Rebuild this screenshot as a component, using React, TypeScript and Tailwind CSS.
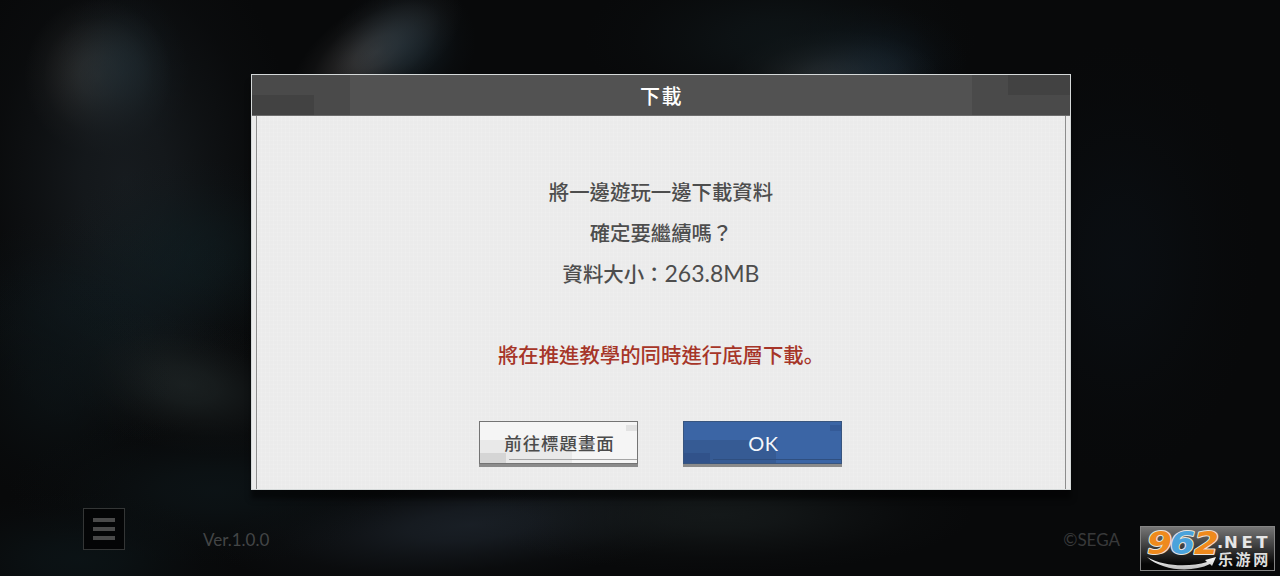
import type { ReactNode } from "react";

const glows = [
    { cx: 98, cy: 76, rx: 64, ry: 68, rotate: 0, color: "#4a4845", opacity: 0.75 },
    { cx: 122, cy: 74, rx: 58, ry: 74, rotate: 0, color: "#1d3642", opacity: 0.55 },
    { cx: 376, cy: 52, rx: 86, ry: 42, rotate: -34, color: "#4a4848", opacity: 0.75 },
    { cx: 404, cy: 46, rx: 64, ry: 58, rotate: -30, color: "#1c303c", opacity: 0.5 },
    { cx: 835, cy: 74, rx: 90, ry: 38, rotate: 0, color: "#444749", opacity: 0.75 },
    { cx: 872, cy: 66, rx: 84, ry: 54, rotate: 0, color: "#152838", opacity: 0.55 },
    { cx: 780, cy: 40, rx: 170, ry: 75, rotate: 0, color: "#10181b", opacity: 0.7 },
    { cx: 125, cy: 180, rx: 150, ry: 230, rotate: 0, color: "#191e22", opacity: 0.85 },
    { cx: 190, cy: 255, rx: 120, ry: 85, rotate: 0, color: "#101f23", opacity: 0.6 },
    { cx: 100, cy: 310, rx: 150, ry: 85, rotate: 0, color: "#101c21", opacity: 0.6 },
    { cx: 185, cy: 385, rx: 115, ry: 58, rotate: 12, color: "#1f2627", opacity: 0.75 },
    { cx: 60, cy: 380, rx: 100, ry: 110, rotate: 0, color: "#0d1518", opacity: 0.7 },
    { cx: 470, cy: 525, rx: 220, ry: 52, rotate: -5, color: "#1d242c", opacity: 0.8 },
    { cx: 215, cy: 490, rx: 180, ry: 65, rotate: 0, color: "#0d1518", opacity: 0.8 },
    { cx: 80, cy: 560, rx: 140, ry: 60, rotate: 0, color: "#0c1518", opacity: 0.8 },
    { cx: 720, cy: 515, rx: 220, ry: 50, rotate: 0, color: "#171c1d", opacity: 0.8 },
    { cx: 1120, cy: 260, rx: 120, ry: 190, rotate: 0, color: "#0b1015", opacity: 0.7 },
];

const Backdrop = () => (
    <svg className="absolute inset-0" width="1280" height="576" viewBox="0 0 1280 576">
        <defs>
            {glows.map((g, i) => (
                <radialGradient key={i} id={`glow-${i}`}>
                    <stop offset="0" stopColor={g.color} stopOpacity={g.opacity} />
                    <stop offset="0.25" stopColor={g.color} stopOpacity={g.opacity * 0.82} />
                    <stop offset="0.5" stopColor={g.color} stopOpacity={g.opacity * 0.45} />
                    <stop offset="0.75" stopColor={g.color} stopOpacity={g.opacity * 0.14} />
                    <stop offset="1" stopColor={g.color} stopOpacity="0" />
                </radialGradient>
            ))}
        </defs>
        <rect width="1280" height="576" fill="#08090a" />
        {glows.map((g, i) => (
            <ellipse
                key={i}
                cx={g.cx}
                cy={g.cy}
                rx={g.rx * 1.15}
                ry={g.ry * 1.15}
                transform={`rotate(${g.rotate} ${g.cx} ${g.cy})`}
                fill={`url(#glow-${i})`}
            />
        ))}
    </svg>
);

const DialogButton = ({ primary, children }: { primary?: boolean; children: ReactNode }) => (
    <button
        className={
            primary
                ? "relative w-[159px] h-[43px] bg-[#3b65a5] border border-[#38557f] text-[#f4f7fb] shadow-[0_3px_0_#8b8b8b]"
                : "relative w-[159px] h-[43px] bg-[#f5f5f5] border border-[#747474] text-[#4b4b4b] shadow-[0_3px_0_#8b8b8b]"
        }
    >
        <span className={`absolute left-0 bottom-0 w-[92px] h-[23px] ${primary ? "bg-[#365b94]" : "bg-[#e9e9e9]"}`} />
        <span className={`absolute left-0 bottom-0 w-[26px] h-[10px] ${primary ? "bg-[#31528a]" : "bg-[#d5d5d5]"}`} />
        <span className={`absolute right-0 top-[3px] w-[11px] h-[6px] ${primary ? "bg-[#345a97]" : "bg-[#e2e2e2]"}`} />
        <span className={`absolute right-0 bottom-[3px] w-[128px] h-px ${primary ? "bg-[#2f4f80]" : "bg-[#a5a5a5]"}`} />
        <span className="relative">{children}</span>
    </button>
);

const SiteBadge = () => (
    <svg className="absolute left-[1140px] top-[526px] overflow-visible" width="135" height="45" viewBox="0 0 135 45">
        <defs>
            <linearGradient id="badge" x1="0" y1="0" x2="0" y2="1">
                <stop offset="0" stopColor="#777" />
                <stop offset="0.45" stopColor="#3e3e3e" />
                <stop offset="0.85" stopColor="#060606" />
            </linearGradient>
            <linearGradient id="silver" x1="0" y1="0" x2="0" y2="1">
                <stop offset="0" stopColor="#fff" />
                <stop offset="1" stopColor="#b9b9b9" />
            </linearGradient>
        </defs>
        <rect x="0.5" y="0.5" width="134" height="44" fill="url(#badge)" stroke="#858585" />
        <path d="M7 31C22 45 52 47 70 38L72 40L76 31L65 34L67 36C50 41 24 41 7 31Z" fill="url(#silver)" />
        <g
            fontFamily="'DejaVu Sans', sans-serif"
            fontWeight="700"
            fontStyle="italic"
            fontSize="32"
            stroke="#e8e4de"
            strokeWidth="2"
            strokeLinejoin="round"
            paintOrder="stroke"
        >
            <text x="7" y="28" textLength="25" lengthAdjust="spacingAndGlyphs" fill="#ef8a1d">9</text>
            <text x="30" y="28" textLength="25" lengthAdjust="spacingAndGlyphs" fill="#4ba3dc">6</text>
            <text x="54" y="28" textLength="25" lengthAdjust="spacingAndGlyphs" fill="#ef8a1d">2</text>
        </g>
        <g fontFamily="'DejaVu Sans', sans-serif" fontWeight="700" fontSize="16.5" fill="#e6e6e6">
            <text x="77" y="22">.</text>
            <text x="84" y="22" letterSpacing="3.6">NET</text>
        </g>
        <text x="78" y="39" letterSpacing="2.6" fontFamily="'Noto Sans CJK SC', sans-serif" fontWeight="700" fontSize="15" fill="#dedede">乐游网</text>
    </svg>
);

const DownloadDialog = () => (
    <section className="w-[820px] h-[416px] flex flex-col border border-[#d5d9d9] bg-[#ebebeb] shadow-[0_9px_5px_rgba(0,0,0,0.5)]">
        <header className="relative h-[41px] shrink-0 flex items-center justify-center bg-[#525252] border-b border-[#6d6d6d]">
            <div className="absolute left-0 top-0 w-[98px] h-[40px] bg-[#4a4a4a]" />
            <div className="absolute left-0 bottom-0 w-[62px] h-[20px] bg-[#424242]" />
            <div className="absolute right-0 top-0 w-[98px] h-[40px] bg-[#4a4a4a]" />
            <div className="absolute right-0 top-0 w-[62px] h-[20px] bg-[#424242]" />
            <h1 className="relative pt-[2px] pl-px text-[20px] font-medium tracking-[1.4px] text-white">下載</h1>
        </header>
        <div className="flex-1 mx-1 border-x border-[#8e8e8e] flex flex-col items-center bg-[#ebebeb] bg-[repeating-linear-gradient(90deg,rgba(255,255,255,0.1)_0_1px,transparent_1px_4px),repeating-linear-gradient(0deg,rgba(255,255,255,0.08)_0_1px,transparent_1px_4px)]">
            <div className="mt-[55px] text-center text-[20.4px] leading-[41px] font-medium text-[#4d4d4d]">
                <p>將一邊遊玩一邊下載資料</p>
                <p>確定要繼續嗎？</p>
                <p>
                    資料大小：<span className="font-['Lato'] text-[23px] font-normal">263.8MB</span>
                </p>
            </div>
            <p className="mt-[40px] text-[20.4px] leading-[41px] font-medium text-[#a63528]">
                將在推進教學的同時進行底層下載<span className="font-['Noto_Sans_CJK_JP']">。</span>
            </p>
            <div className="mt-[46px] flex gap-[45px] mr-px">
                <DialogButton>
                    <span className="inline-block pt-[2px] pl-[2px] text-[17.5px] font-medium tracking-[0.9px]">前往標題畫面</span>
                </DialogButton>
                <DialogButton primary>
                    <span className="pl-[2px] font-['Lato'] text-[20px] tracking-[0.5px]">OK</span>
                </DialogButton>
            </div>
        </div>
    </section>
);

export default function App() {
    return (
        <main className="relative w-[1280px] h-[576px] overflow-hidden bg-[#08090a] font-['Noto_Sans_CJK_TC',sans-serif]">
            <Backdrop />
            <div className="relative pt-[74px] pl-[251px]">
                <DownloadDialog />
            </div>
            <footer className="relative mt-[18px] pl-[83px] pr-[160px] flex items-start font-['Lato'] text-[17px] leading-[22px] text-[#434546]">
                <button className="w-[42px] h-[42px] flex flex-col items-center justify-center gap-[5px] bg-[#040506] border border-[#343636]">
                    <span className="w-[22px] h-[4px] bg-[#4a4a4a]" />
                    <span className="w-[22px] h-[4px] bg-[#4a4a4a]" />
                    <span className="w-[22px] h-[4px] bg-[#4a4a4a]" />
                </button>
                <span className="mt-[21px] ml-[78px]">Ver.1.0.0</span>
                <span className="mt-[21px] ml-auto text-[#38393a]">©SEGA</span>
            </footer>
            <SiteBadge />
        </main>
    );
}
